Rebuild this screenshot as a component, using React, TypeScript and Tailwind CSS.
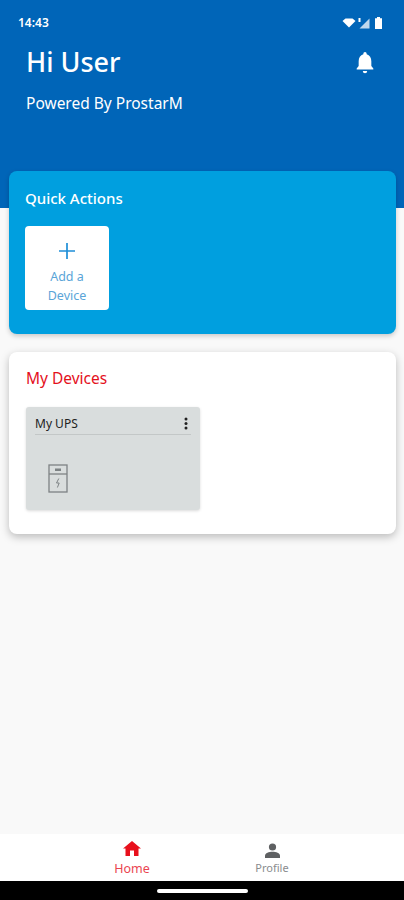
import React from "react";

const font = { fontFamily: '"Noto Sans", "Open Sans", sans-serif' };

const StatusIcons = () => (
    <div className="flex items-center gap-[2px]">
        <svg width="14" height="10" viewBox="0 0 14 10" fill="white">
            <path d="M0.5 3 L3.5 0.5 H10.5 L13.5 3 L7 9.5 Z" />
        </svg>
        <svg width="12" height="11" viewBox="0 0 12 11" fill="white">
            <path d="M11.5 0.5 V10.5 H1.5 Z" opacity="0.75" />
            <rect x="0.5" y="0" width="2" height="4" />
        </svg>
        <svg width="9" height="12" viewBox="0 0 9 12" fill="white" className="ml-[2px]">
            <path d="M3 0 H6 V1.2 H8 V12 H1 V1.2 H3 Z" />
        </svg>
    </div>
);

const BellIcon = () => (
    <svg width="20" height="23" viewBox="0 0 24 26" fill="white" preserveAspectRatio="none">
        <path d="M12 1 a2 2 0 0 1 2 2 v0.8 c3.6 1 5.6 4 5.6 7.7 v5.5 l2.4 2.7 v1.3 H2 v-1.3 l2.4-2.7 v-5.5 c0-3.7 2-6.7 5.6-7.7 V3 a2 2 0 0 1 2-2 Z" />
        <path d="M9.4 22.6 h5.2 a2.6 2.6 0 0 1-5.2 0 Z" />
    </svg>
);

const UpsIcon = () => (
    <svg width="20" height="29" viewBox="0 0 20 29" fill="none" stroke="#7d8284" strokeWidth="1.3">
        <rect x="1" y="1" width="18" height="27" />
        <path d="M1 10 H19" />
        <rect x="7" y="4.5" width="6" height="2.5" fill="#7d8284" stroke="none" />
        <path d="M10.8 14.5 L8.5 19 H11.2 L9.4 23.5" strokeWidth="1" />
    </svg>
);

const App = () => {
    return (
        <div className="w-[404px] h-[900px] flex flex-col bg-[#f9f9f9] overflow-hidden" style={font}>
            {/* Blue header */}
            <div className="h-[208px] shrink-0 bg-[#0065b8] text-white">
                <div className="flex items-center justify-between pl-[18px] pr-[21px] pt-[15px] h-[31px]">
                    <span className="text-[12px] leading-[16px] font-semibold">14:43</span>
                    <StatusIcons />
                </div>
                <div className="flex items-center justify-between pl-[26px] pr-[29px] mt-[13px]">
                    <span className="text-[27px] leading-[36px] font-medium">Hi User</span>
                    <BellIcon />
                </div>
                <p className="pl-[26px] mt-[13px] text-[15.5px] leading-[20px]">Powered By ProstarM</p>
            </div>

            {/* Cards */}
            <div className="-mt-[37px] pl-[9px] pr-[8px] pb-[8px] flex flex-col gap-[18px] relative">
                <section className="h-[163px] rounded-[8px] bg-[#009fdf] px-[16px] pt-[16px] shadow-[0_2px_5px_rgba(0,0,0,0.2)]">
                    <h2 className="text-white text-[15px] leading-[22px] font-medium">Quick Actions</h2>
                    <button className="mt-[17px] w-[84px] h-[84px] rounded-[4px] bg-white flex flex-col items-center pt-[17px]">
                        <svg width="16" height="16" viewBox="0 0 16 16" stroke="#1f8fd8" strokeWidth="1.7">
                            <path d="M8 0 V16 M0 8 H16" />
                        </svg>
                        <span className="mt-[9px] text-[12.5px] leading-[18.5px] text-[#5aa5d8] text-center">
                            Add a
                            <br />
                            Device
                        </span>
                    </button>
                </section>

                <section className="h-[182px] rounded-[8px] bg-white px-[17px] pt-[15px] shadow-[0_3px_8px_rgba(0,0,0,0.25)]">
                    <h2 className="text-[#e4101c] text-[15.5px] leading-[22px]">My Devices</h2>
                    <div className="mt-[18px] w-[174px] h-[103px] rounded-[3px] bg-[#d9dddd] shadow-[0_1px_3px_rgba(0,0,0,0.15)] px-[9px]">
                        <div className="h-[28px] pt-[6px] flex items-center justify-between border-b border-[#c3c7c7]">
                            <span className="text-[12px] leading-[16px] text-[#222]">My UPS</span>
                            <svg width="4" height="13" viewBox="0 0 4 13" fill="#222" className="mr-[3px]">
                                <circle cx="2" cy="2" r="1.5" />
                                <circle cx="2" cy="6.5" r="1.5" />
                                <circle cx="2" cy="11" r="1.5" />
                            </svg>
                        </div>
                        <div className="pl-[13px] pt-[29px]">
                            <UpsIcon />
                        </div>
                    </div>
                </section>
            </div>

            <div className="flex-1" />

            {/* Bottom nav */}
            <nav className="h-[47px] shrink-0 bg-white flex pl-[62px]">
                <div className="w-[140px] flex flex-col items-center pt-[7px]">
                    <svg width="18" height="15" viewBox="0 0 18 15" fill="#e8101c">
                        <path d="M9 0 L18 7.5 H15.5 V15 H11 V9.5 H7 V15 H2.5 V7.5 H0 Z" />
                    </svg>
                    <span className="text-[12.5px] leading-[16px] mt-[5px] text-[#ea4450]">Home</span>
                </div>
                <div className="w-[140px] flex flex-col items-center pt-[9px]">
                    <svg width="15" height="15" viewBox="0 0 15 15" fill="#5e6062">
                        <circle cx="7.5" cy="4" r="3.6" />
                        <path d="M0 15 V12.6 C0 10.2 4 8.8 7.5 8.8 S15 10.2 15 12.6 V15 Z" />
                    </svg>
                    <span className="text-[11px] leading-[16px] mt-[2px] text-[#8a8c8e]">Profile</span>
                </div>
            </nav>

            {/* Gesture bar */}
            <div className="h-[19px] shrink-0 bg-black flex items-center justify-center">
                <div className="w-[91px] h-[4px] rounded-full bg-white" />
            </div>
        </div>
    );
};

export default App;
